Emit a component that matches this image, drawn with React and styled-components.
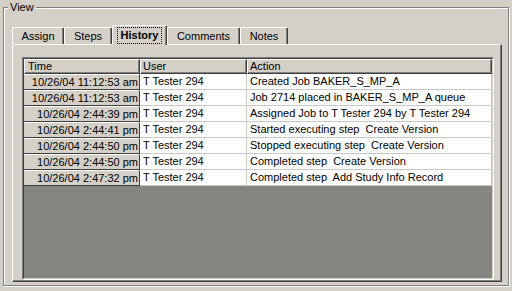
import React from "react";
import styled, { createGlobalStyle } from "styled-components";

const GlobalStyle = createGlobalStyle`
  html, body {
    margin: 0;
    padding: 0;
    background: #d4d0c8;
  }
  body {
    font-family: "Liberation Sans", Arial, sans-serif;
    font-size: 11px;
    color: #000;
  }
`;

const Page = styled.div`
  width: 512px;
  height: 291px;
  box-sizing: border-box;
  padding: 7px 3px 5px 3px;
  display: flex;
`;

const GroupBox = styled.div`
  position: relative;
  flex: 1;
  display: flex;
  flex-direction: column;
  border: 1px solid #808080;
  box-shadow: inset 1px 1px 0 #fff, 1px 1px 0 #fff;
  padding: 17px 6px 3px 8px;
`;

const Legend = styled.span`
  position: absolute;
  top: -7px;
  left: 4px;
  padding: 0 2px;
  line-height: 13px;
  background: #d4d0c8;
`;

const TabRow = styled.div`
  height: 19px;
  display: flex;
  align-items: flex-end;
  position: relative;
  z-index: 1;
`;

const Tab = styled.div`
  box-sizing: border-box;
  width: ${(p) => p.$w}px;
  height: ${(p) => (p.$active ? 20 : 17)}px;
  margin-bottom: ${(p) => (p.$active ? -1 : 0)}px;
  background: #d4d0c8;
  border-top: 1px solid #fff;
  border-left: 1px solid #fff;
  border-right: 1px solid #404040;
  border-radius: 2px 2px 0 0;
  box-shadow: inset -1px 0 0 #808080;
  display: flex;
  align-items: ${(p) => (p.$active ? "flex-start" : "center")};
  justify-content: center;
  padding-top: ${(p) => (p.$active ? 1 : 0)}px;
  font-weight: ${(p) => (p.$active ? "bold" : "normal")};
`;

const FocusRing = styled.span`
  border: 1px dotted #000;
  padding: 1px 3px;
  line-height: 13px;
`;

const Panel = styled.div`
  flex: 1;
  display: flex;
  border: 1px solid;
  border-color: #fff #404040 #404040 #fff;
  box-shadow: inset -1px -1px 0 #808080;
  padding: 12px 7px 1px 9px;
`;

const ListFrame = styled.div`
  flex: 1;
  display: flex;
  border: 1px solid;
  border-color: #808080 #fff #fff #808080;
`;

const ListView = styled.div`
  flex: 1;
  display: flex;
  flex-direction: column;
  border: 1px solid;
  border-color: #404040 #d4d0c8 #d4d0c8 #404040;
  background: #858581;
  overflow: hidden;
`;

const Grid = styled.div`
  display: grid;
  grid-template-columns: 116px 107px 1fr;
`;

const HeadCell = styled.div`
  box-sizing: border-box;
  height: 15px;
  background: #d4d0c8;
  border-top: 1px solid #fff;
  border-left: 1px solid #fff;
  border-right: 1px solid #404040;
  border-bottom: 1px solid #404040;
  box-shadow: inset -1px -1px 0 #808080;
  padding-left: ${(p) => p.$pad}px;
  line-height: 12px;
`;

const TimeCell = styled.div`
  box-sizing: border-box;
  height: 16px;
  background: #d4d0c8;
  border-top: 1px solid #fff;
  border-right: 1px solid #404040;
  border-bottom: 1px solid #404040;
  text-align: right;
  padding-right: 1px;
  line-height: 14px;
  white-space: nowrap;
`;

const Cell = styled.div`
  box-sizing: border-box;
  height: 16px;
  background: #fff;
  border-right: 1px solid #c8c8c8;
  border-bottom: 1px solid #c8c8c8;
  padding-left: 3px;
  line-height: 15px;
  white-space: pre;
  overflow: hidden;
`;

const tabs = [
  { label: "Assign", w: 52 },
  { label: "Steps", w: 48 },
  { label: "History", w: 55, active: true },
  { label: "Comments", w: 73 },
  { label: "Notes", w: 48 },
];

const rows = [
  ["10/26/04 11:12:53 am", "T Tester 294", "Created Job BAKER_S_MP_A"],
  ["10/26/04 11:12:53 am", "T Tester 294", "Job 2714 placed in BAKER_S_MP_A queue"],
  ["10/26/04 2:44:39 pm", "T Tester 294", "Assigned Job to T Tester 294 by T Tester 294"],
  ["10/26/04 2:44:41 pm", "T Tester 294", "Started executing step  Create Version"],
  ["10/26/04 2:44:50 pm", "T Tester 294", "Stopped executing step  Create Version"],
  ["10/26/04 2:44:50 pm", "T Tester 294", "Completed step  Create Version"],
  ["10/26/04 2:47:32 pm", "T Tester 294", "Completed step  Add Study Info Record"],
];

export default function App() {
  return (
    <Page>
      <GlobalStyle />
      <GroupBox>
        <Legend>View</Legend>
        <TabRow>
          {tabs.map((t) => (
            <Tab key={t.label} $w={t.w} $active={t.active}>
              {t.active ? <FocusRing>{t.label}</FocusRing> : t.label}
            </Tab>
          ))}
        </TabRow>
        <Panel>
          <ListFrame>
            <ListView>
              <Grid>
                <HeadCell $pad={3}>Time</HeadCell>
                <HeadCell $pad={2}>User</HeadCell>
                <HeadCell $pad={2}>Action</HeadCell>
              </Grid>
              {rows.map((r, i) => (
                <Grid key={i}>
                  <TimeCell>{r[0]}</TimeCell>
                  <Cell>{r[1]}</Cell>
                  <Cell>{r[2]}</Cell>
                </Grid>
              ))}
            </ListView>
          </ListFrame>
        </Panel>
      </GroupBox>
    </Page>
  );
}
